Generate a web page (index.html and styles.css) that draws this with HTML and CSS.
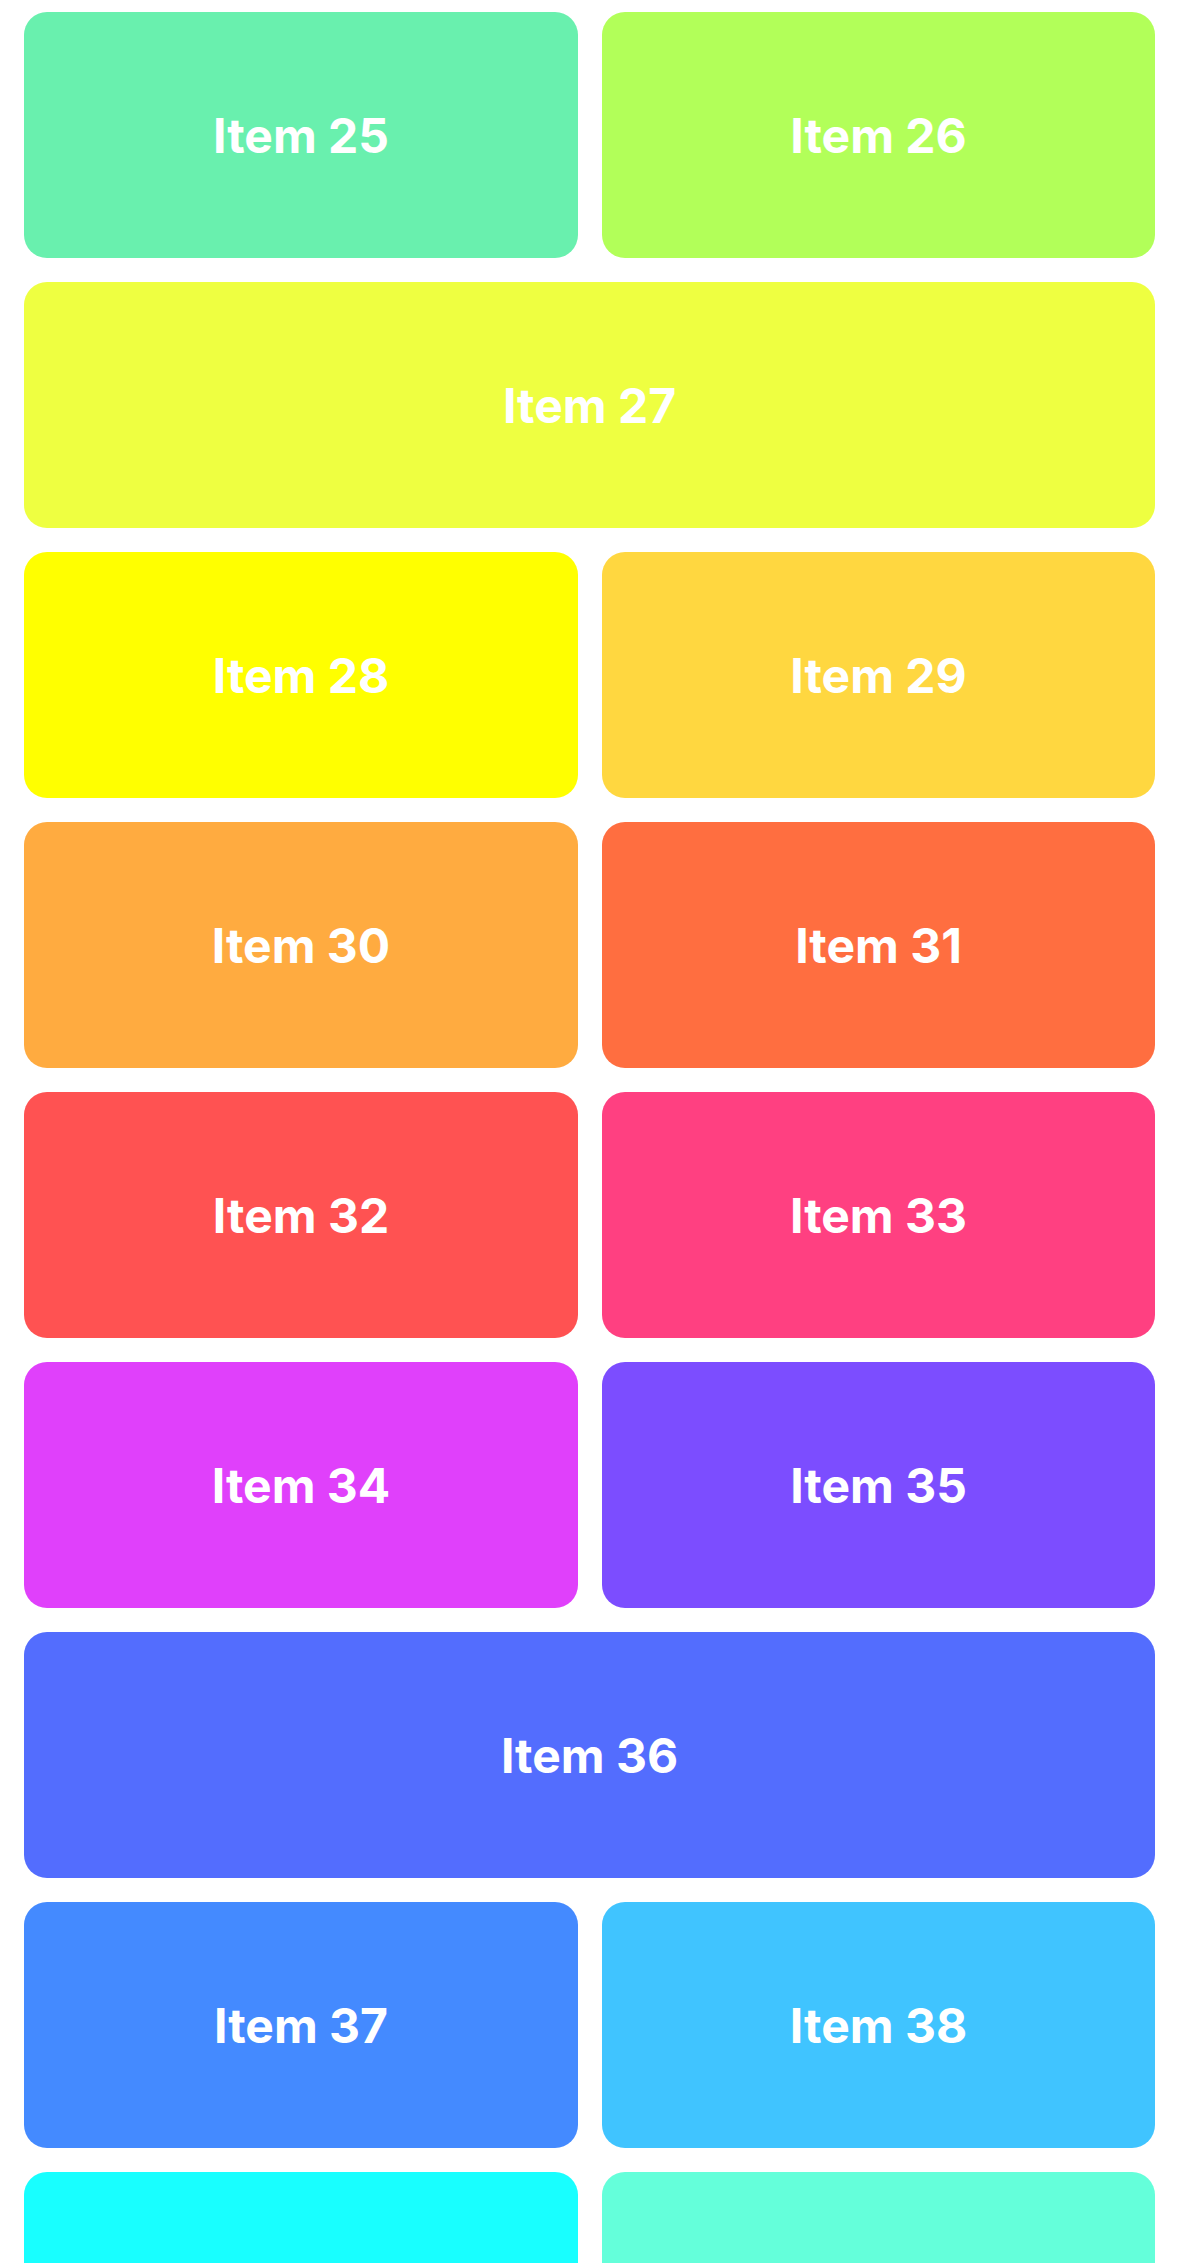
FILE: index.html
```html
<!DOCTYPE html>
<html>
<head>
<meta charset="utf-8">
<link rel="stylesheet" href="styles.css">
</head>
<body>
<div class="grid">
  <div class="tile c25">Item 25</div>
  <div class="tile c26">Item 26</div>
  <div class="tile wide c27">Item 27</div>
  <div class="tile c28">Item 28</div>
  <div class="tile c29">Item 29</div>
  <div class="tile c30">Item 30</div>
  <div class="tile c31">Item 31</div>
  <div class="tile c32">Item 32</div>
  <div class="tile c33">Item 33</div>
  <div class="tile c34">Item 34</div>
  <div class="tile c35">Item 35</div>
  <div class="tile wide c36">Item 36</div>
  <div class="tile c37">Item 37</div>
  <div class="tile c38">Item 38</div>
  <div class="tile c39">Item 39</div>
  <div class="tile c40">Item 40</div>
</div>
</body>
</html>
```
FILE: styles.css
```css
html, body {
  margin: 0;
  padding: 0;
  background: #ffffff;
}
body {
  font-family: Inter, "Noto Sans", sans-serif;
  overflow: hidden;
  height: 2263px;
}
.grid {
  display: grid;
  grid-template-columns: 554px 553px;
  grid-auto-rows: 246px;
  gap: 24px;
  padding: 12px 24px;
}
.tile {
  border-radius: 23px;
  display: flex;
  align-items: center;
  justify-content: center;
  color: #ffffff;
  font-size: 48px;
  font-weight: 700;
}
.wide { grid-column: span 2; }
.c25 { background: #69F0AE; }
.c26 { background: #B2FF59; }
.c27 { background: #EEFF41; }
.c28 { background: #FFFF00; }
.c29 { background: #FFD740; }
.c30 { background: #FFAB40; }
.c31 { background: #FF6E40; }
.c32 { background: #FF5252; }
.c33 { background: #FF4081; }
.c34 { background: #E040FB; }
.c35 { background: #7C4DFF; }
.c36 { background: #536DFE; }
.c37 { background: #448AFF; }
.c38 { background: #40C4FF; }
.c39 { background: #18FFFF; }
.c40 { background: #64FFDA; }
```
